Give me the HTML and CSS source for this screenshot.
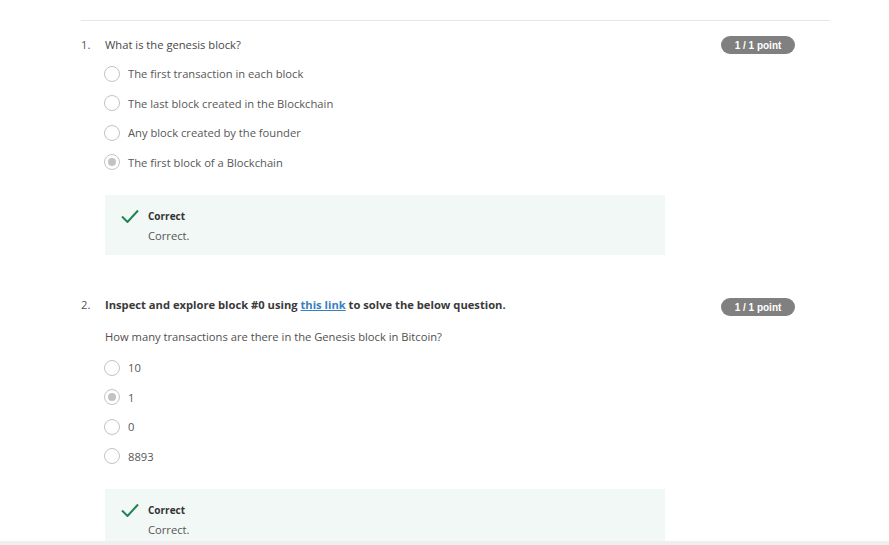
FILE: index.html
```html
<!DOCTYPE html>
<html lang="en">
<head>
<meta charset="utf-8">
<title>Quiz</title>
<link rel="stylesheet" href="styles.css">
</head>
<body>
<div class="page">
  <main class="content">
    <div class="sheet">
      <section class="question q1">
        <div class="q-head">
          <span class="q-num">1.</span>
          <div class="q-title">What is the genesis block?</div>
          <span class="badge">1 / 1 point</span>
        </div>
        <ul class="options">
          <li class="option"><span class="radio"></span><span>The first transaction in each block</span></li>
          <li class="option"><span class="radio"></span><span>The last block created in the Blockchain</span></li>
          <li class="option"><span class="radio"></span><span>Any block created by the founder</span></li>
          <li class="option"><span class="radio checked"></span><span>The first block of a Blockchain</span></li>
        </ul>
        <div class="feedback">
          <svg class="check" width="18" height="14" viewBox="0 0 18 14"><path d="M1 7.5 L6.5 13 L17 1.5" fill="none" stroke="#1f8354" stroke-width="2"/></svg>
          <div class="fb-text">
            <div class="fb-title">Correct</div>
            <div class="fb-body">Correct.</div>
          </div>
        </div>
      </section>
      <section class="question q2">
        <div class="q-head">
          <span class="q-num up">2.</span>
          <div class="q-title bold">Inspect and explore block #0 using <a href="#">this link</a> to solve the below question.</div>
          <span class="badge">1 / 1 point</span>
        </div>
        <p class="q-sub">How many transactions are there in the Genesis block in Bitcoin?</p>
        <ul class="options">
          <li class="option"><span class="radio"></span><span>10</span></li>
          <li class="option"><span class="radio checked"></span><span>1</span></li>
          <li class="option"><span class="radio"></span><span>0</span></li>
          <li class="option"><span class="radio"></span><span>8893</span></li>
        </ul>
        <div class="feedback">
          <svg class="check" width="18" height="14" viewBox="0 0 18 14"><path d="M1 7.5 L6.5 13 L17 1.5" fill="none" stroke="#1f8354" stroke-width="2"/></svg>
          <div class="fb-text">
            <div class="fb-title">Correct</div>
            <div class="fb-body">Correct.</div>
          </div>
        </div>
      </section>
    </div>
  </main>
  <div class="hbar"></div>
</div>
</body>
</html>
```
FILE: styles.css
```css
* { box-sizing: border-box; }
html, body { margin: 0; padding: 0; background: #fff; }
body {
  font-family: "Open Sans", "Liberation Sans", sans-serif;
  font-size: 11.2px;
  color: #4d4d4d;
}
.page {
  height: 100vh;
  display: flex;
  flex-direction: column;
}
.content {
  flex: 1;
  overflow: hidden;
}
.hbar {
  height: 4px;
  background: #efefef;
}
.sheet {
  margin: 20px 0 0 81px;
  width: 749px;
  border-top: 1px solid #e6e6e6;
  padding-top: 15px;
}
.q2 { margin-top: 43px; }
.q-head {
  display: flex;
  align-items: center;
  height: 18px;
}
.q-num {
  width: 24px;
  flex: none;
  color: #555;
  margin-bottom: 2px;
}
.q-num.up { margin-bottom: 5px; }
.q-title {
  flex: 1;
  color: #484848;
  margin-bottom: 2px;
}
.q-title.bold { font-weight: 700; color: #3a3a3a; margin-bottom: 5px; }
.q-title a { color: #3a80c0; text-decoration: underline; }
.badge {
  flex: none;
  width: 74px;
  height: 18px;
  margin-right: 35px;
  border-radius: 9px;
  background: #808080;
  color: #fff;
  font-family: "Liberation Sans", Arial, sans-serif;
  font-weight: 700;
  font-size: 10px;
  display: flex;
  align-items: center;
  justify-content: center;
}
.q-sub {
  margin: 13px 0 0 24px;
  line-height: 16px;
  color: #505050;
}
.options {
  list-style: none;
  margin: 5px 0 0 23px;
  padding: 0;
}
.q2 .options { margin-top: 8px; }
.option {
  height: 29.5px;
  display: flex;
  align-items: center;
  color: #575757;
}
.radio {
  width: 16px;
  height: 16px;
  border: 1.5px solid #c4c4c4;
  border-radius: 50%;
  margin-right: 8px;
  flex: none;
  display: flex;
  align-items: center;
  justify-content: center;
}
.radio.checked::after {
  content: "";
  width: 8px;
  height: 8px;
  border-radius: 50%;
  background: #c2c2c2;
}
.feedback {
  margin: 18px 0 0 24px;
  width: 560px;
  height: 60px;
  background: #f1f8f5;
  display: flex;
  align-items: flex-start;
  padding: 14px 0 0 16px;
}
.check {
  flex: none;
  margin-right: 9px;
}
.fb-text { line-height: 20px; margin-top: -3px; }
.fb-title {
  font-weight: 700;
  font-size: 10px;
  color: #333;
}
.fb-body { color: #555; }
```
